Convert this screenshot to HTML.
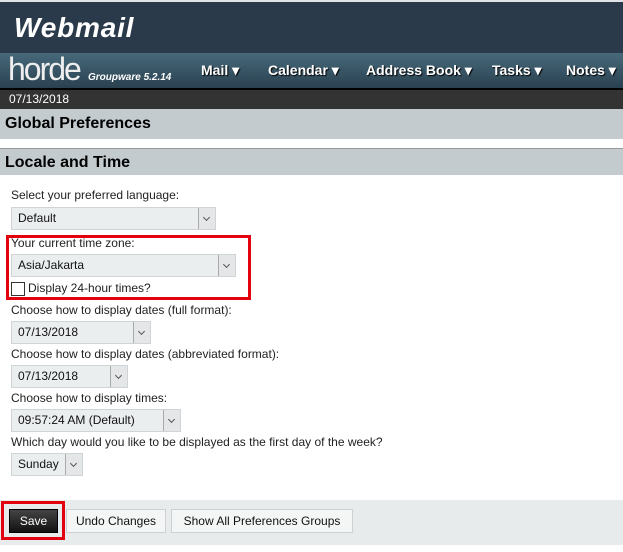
<!DOCTYPE html>
<html><head><style>
body{margin:0;width:623px;height:552px;position:relative;overflow:hidden;background:#fff;font-family:"Liberation Sans",Arial,sans-serif;}
.a{position:absolute}
.top{left:0;top:0;width:623px;height:53px;background:#2b3a4b;border-top:2px solid #e0e4e6;box-sizing:border-box}
.nav{left:0;top:53px;width:623px;height:35px;background:linear-gradient(#47697a,#2a4150)}
.navi{color:#fff;font-weight:bold;font-size:14px;top:62px;text-shadow:1px 1px 1px #000}
.lbl{font-size:12px;color:#222;left:11px}
.sel{left:11px;height:23px;background:#ebeeef;border:1px solid #cfd4d6;box-sizing:border-box;font-size:12px;line-height:21px;padding-left:6px;color:#111}
.sel i{position:absolute;right:0;top:0;width:16px;height:21px;border-left:1px solid #aaa;background:#e4e6e7;font-style:normal}
.sel i:after{content:"";position:absolute;left:5px;top:7px;width:4px;height:4px;border-right:1px solid #555;border-bottom:1px solid #555;transform:rotate(45deg)}
.btn{top:509px;height:24px;background:#f4f5f5;border:1px solid #cdd1d3;box-sizing:border-box;font-size:12px;line-height:22px;text-align:center;color:#111}
</style></head><body>
<div class="a top"></div>
<div class="a" style="left:14px;top:12px;color:#fff;font-weight:bold;font-style:italic;font-size:28px;letter-spacing:0.8px">Webmail</div>
<div class="a nav"></div>
<div class="a" style="left:8px;top:51px;color:#eee;font-size:32px;letter-spacing:-2px">horde</div>
<div class="a" style="left:88px;top:72px;color:#fff;font-weight:bold;font-style:italic;font-size:10px">Groupware 5.2.14</div>
<div class="a navi" style="left:201px">Mail ▾</div>
<div class="a navi" style="left:268px">Calendar ▾</div>
<div class="a navi" style="left:366px">Address Book ▾</div>
<div class="a navi" style="left:492px">Tasks ▾</div>
<div class="a navi" style="left:566px">Notes ▾</div>
<div class="a" style="left:0;top:88px;width:623px;height:2px;background:#000"></div>
<div class="a" style="left:0;top:90px;width:623px;height:19px;background:#333;color:#fff;font-size:12px;line-height:19px;padding-left:9px;box-sizing:border-box">07/13/2018</div>
<div class="a" style="left:0;top:109px;width:623px;height:30px;background:#c3cbce;font-weight:bold;font-size:16px;line-height:30px;padding-left:5px;box-sizing:border-box">Global Preferences</div>
<div class="a" style="left:0;top:148px;width:623px;height:27px;background:#c3cbce;border-top:1px solid #999;font-weight:bold;font-size:16px;line-height:27px;padding-left:5px;box-sizing:border-box">Locale and Time</div>
<div class="a lbl" style="top:188px">Select your preferred language:</div>
<div class="a sel" style="top:207px;width:205px">Default<i></i></div>
<div class="a" style="left:6px;top:235px;width:245px;height:65px;border:3px solid #e3000f;box-sizing:border-box"></div>
<div class="a lbl" style="top:236px">Your current time zone:</div>
<div class="a sel" style="top:254px;width:225px">Asia/Jakarta<i></i></div>
<div class="a" style="left:11px;top:282px;width:12px;height:12px;border:1px solid #333;background:#fff"></div>
<div class="a lbl" style="left:28px;top:281px">Display 24-hour times?</div>
<div class="a lbl" style="top:303px">Choose how to display dates (full format):</div>
<div class="a sel" style="top:321px;width:140px">07/13/2018<i></i></div>
<div class="a lbl" style="top:347px">Choose how to display dates (abbreviated format):</div>
<div class="a sel" style="top:365px;width:117px">07/13/2018<i></i></div>
<div class="a lbl" style="top:391px">Choose how to display times:</div>
<div class="a sel" style="top:409px;width:170px">09:57:24 AM (Default)<i></i></div>
<div class="a lbl" style="top:435px">Which day would you like to be displayed as the first day of the week?</div>
<div class="a sel" style="top:453px;width:72px">Sunday<i></i></div>
<div class="a" style="left:0;top:500px;width:623px;height:45px;background:#e8ebec"></div>
<div class="a btn" style="left:9px;width:49px;background:linear-gradient(#444,#111);color:#fff;border-color:#000">Save</div>
<div class="a" style="left:1px;top:501px;width:64px;height:39px;border:3px solid #e3000f;box-sizing:border-box"></div>
<div class="a btn" style="left:66px;width:100px">Undo Changes</div>
<div class="a btn" style="left:171px;width:182px">Show All Preferences Groups</div>
</body></html>
